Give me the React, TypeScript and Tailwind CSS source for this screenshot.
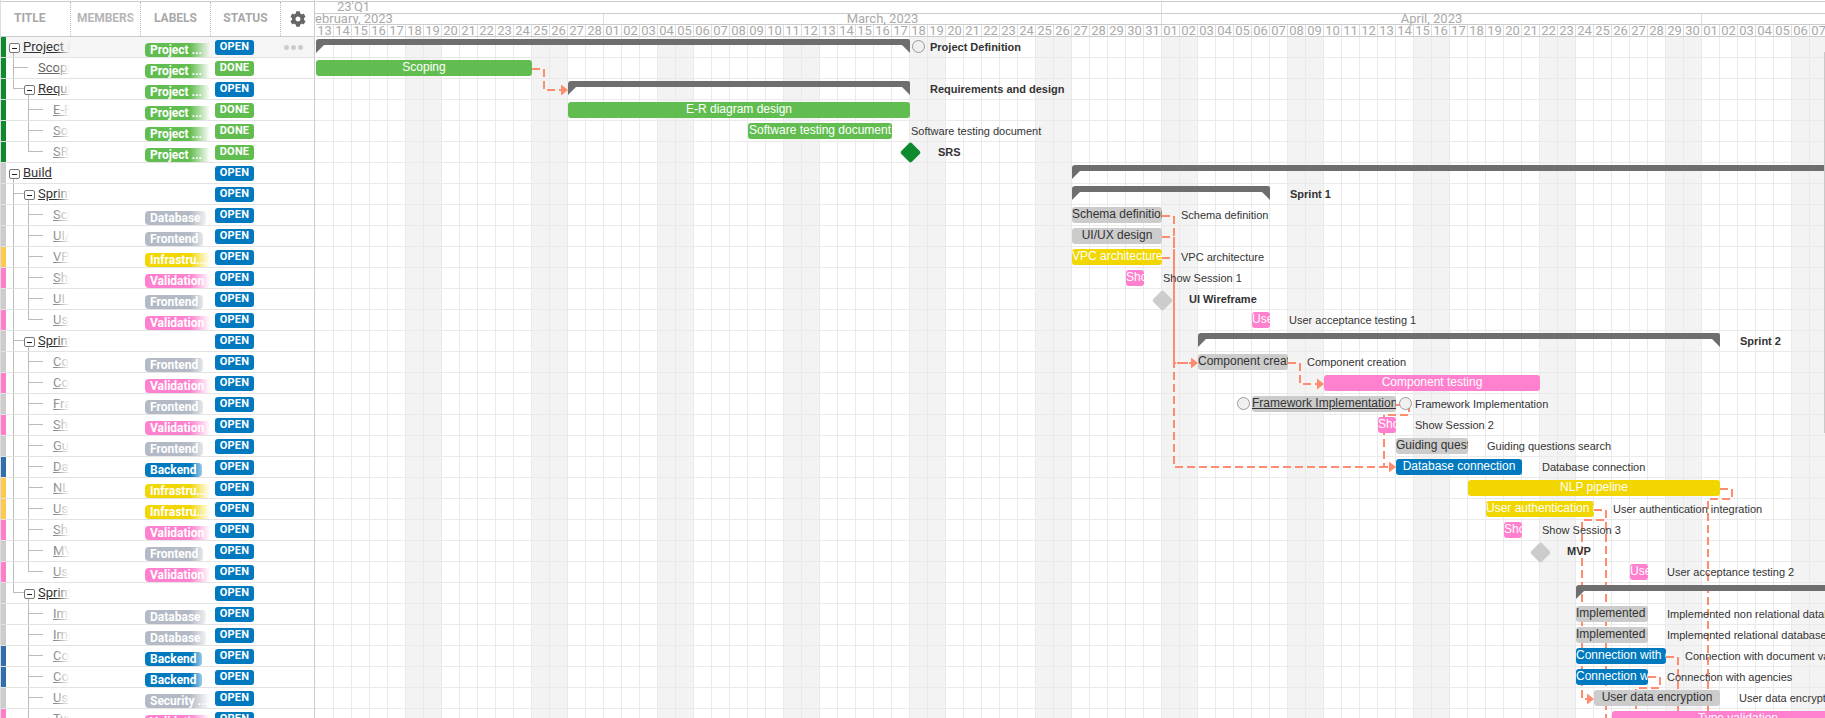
import { FaCog } from 'react-icons/fa'

type Status = 'OPEN' | 'DONE'
type LabelKind = 'project' | 'database' | 'frontend' | 'infra' | 'validation' | 'backend' | 'security'

interface TreeRow {
  title: string
  level: 0 | 1 | 2
  strip: string
  label?: LabelKind
  status: Status
  parent?: boolean
  last?: boolean
  outer?: boolean
}

const GREEN = 'bg-[#0f8a2f]'
const GRAY = 'bg-[#cccccc]'
const YELLOW = 'bg-[#ffc94f]'
const PINK = 'bg-[#ff7ecb]'
const BLUE = 'bg-[#2f6fae]'

const labels: Record<LabelKind, { text: string; cls: string }> = {
  project: { text: 'Project ...', cls: 'bg-[#61bd4f] w-[70px]' },
  database: { text: 'Database', cls: 'bg-[#b3bac5] w-[61px]' },
  frontend: { text: 'Frontend', cls: 'bg-[#b3bac5] w-[58px]' },
  infra: { text: 'Infrastru...', cls: 'bg-[#f2d600] w-[70px]' },
  validation: { text: 'Validation', cls: 'bg-[#ff80ce] w-[70px]' },
  backend: { text: 'Backend', cls: 'bg-[#0079bf] w-[57px]' },
  security: { text: 'Security ...', cls: 'bg-[#b3bac5] w-[70px]' },
}

const rows: TreeRow[] = [
  { title: 'Project Definition', level: 0, strip: GREEN, label: 'project', status: 'OPEN', parent: true },
  { title: 'Scoping', level: 1, strip: GREEN, label: 'project', status: 'DONE' },
  { title: 'Requirements and design', level: 1, strip: GREEN, label: 'project', status: 'OPEN', parent: true, last: true },
  { title: 'E-R diagram design', level: 2, strip: GREEN, label: 'project', status: 'DONE' },
  { title: 'Software testing document', level: 2, strip: GREEN, label: 'project', status: 'DONE' },
  { title: 'SRS', level: 2, strip: GREEN, label: 'project', status: 'DONE', last: true },
  { title: 'Build', level: 0, strip: GRAY, status: 'OPEN', parent: true },
  { title: 'Sprint 1', level: 1, strip: GRAY, status: 'OPEN', parent: true },
  { title: 'Schema definition', level: 2, strip: GRAY, label: 'database', status: 'OPEN', outer: true },
  { title: 'UI/UX design', level: 2, strip: GRAY, label: 'frontend', status: 'OPEN', outer: true },
  { title: 'VPC architecture', level: 2, strip: YELLOW, label: 'infra', status: 'OPEN', outer: true },
  { title: 'Show Session 1', level: 2, strip: PINK, label: 'validation', status: 'OPEN', outer: true },
  { title: 'UI Wireframe', level: 2, strip: GRAY, label: 'frontend', status: 'OPEN', outer: true },
  { title: 'User acceptance testing 1', level: 2, strip: PINK, label: 'validation', status: 'OPEN', outer: true, last: true },
  { title: 'Sprint 2', level: 1, strip: GRAY, status: 'OPEN', parent: true },
  { title: 'Component creation', level: 2, strip: GRAY, label: 'frontend', status: 'OPEN', outer: true },
  { title: 'Component testing', level: 2, strip: PINK, label: 'validation', status: 'OPEN', outer: true },
  { title: 'Framework Implementation', level: 2, strip: GRAY, label: 'frontend', status: 'OPEN', outer: true },
  { title: 'Show Session 2', level: 2, strip: PINK, label: 'validation', status: 'OPEN', outer: true },
  { title: 'Guiding questions search', level: 2, strip: GRAY, label: 'frontend', status: 'OPEN', outer: true },
  { title: 'Database connection', level: 2, strip: BLUE, label: 'backend', status: 'OPEN', outer: true },
  { title: 'NLP pipeline', level: 2, strip: YELLOW, label: 'infra', status: 'OPEN', outer: true },
  { title: 'User authentication integration', level: 2, strip: YELLOW, label: 'infra', status: 'OPEN', outer: true },
  { title: 'Show Session 3', level: 2, strip: PINK, label: 'validation', status: 'OPEN', outer: true },
  { title: 'MVP', level: 2, strip: GRAY, label: 'frontend', status: 'OPEN', outer: true },
  { title: 'User acceptance testing 2', level: 2, strip: PINK, label: 'validation', status: 'OPEN', outer: true, last: true },
  { title: 'Sprint 3', level: 1, strip: GRAY, status: 'OPEN', parent: true, last: true },
  { title: 'Implemented non relational database', level: 2, strip: GRAY, label: 'database', status: 'OPEN' },
  { title: 'Implemented relational database', level: 2, strip: GRAY, label: 'database', status: 'OPEN' },
  { title: 'Connection with document validation', level: 2, strip: BLUE, label: 'backend', status: 'OPEN' },
  { title: 'Connection with agencies', level: 2, strip: BLUE, label: 'backend', status: 'OPEN' },
  { title: 'User data encryption', level: 2, strip: GRAY, label: 'security', status: 'OPEN' },
  { title: 'Type validation', level: 2, strip: PINK, label: 'validation', status: 'OPEN' },
]

const DAY = 18
const ROW = 21
const CHART_X = 315

// day numbers from Feb 13 to May 7
const days: string[] = []
const monthLengths: [number, number][] = [[13, 28], [1, 31], [1, 30], [1, 7]]
monthLengths.forEach(([from, to]) => {
  for (let d = from; d <= to; d++) days.push(String(d).padStart(2, '0'))
})

type BarColor = 'green' | 'gray' | 'yellow' | 'pink' | 'blue'
const barColors: Record<BarColor, string> = {
  green: 'bg-[#61bd4f] text-white',
  gray: 'bg-[#cccccc] text-[#333333]',
  yellow: 'bg-[#f2d600] text-white',
  pink: 'bg-[#ff80ce] text-white',
  blue: 'bg-[#0079bf] text-white',
}

interface Bar {
  row: number
  from: number
  to: number
  color: BarColor
  text: string
  underline?: boolean
}

const bars: Bar[] = [
  { row: 1, from: 0, to: 12, color: 'green', text: 'Scoping' },
  { row: 3, from: 14, to: 33, color: 'green', text: 'E-R diagram design' },
  { row: 4, from: 24, to: 32, color: 'green', text: 'Software testing document' },
  { row: 8, from: 42, to: 47, color: 'gray', text: 'Schema definition' },
  { row: 9, from: 42, to: 47, color: 'gray', text: 'UI/UX design' },
  { row: 10, from: 42, to: 47, color: 'yellow', text: 'VPC architecture' },
  { row: 11, from: 45, to: 46, color: 'pink', text: 'Show Session 1' },
  { row: 13, from: 52, to: 53, color: 'pink', text: 'User acceptance testing 1' },
  { row: 15, from: 49, to: 54, color: 'gray', text: 'Component creation' },
  { row: 16, from: 56, to: 68, color: 'pink', text: 'Component testing' },
  { row: 17, from: 52, to: 60, color: 'gray', text: 'Framework Implementation', underline: true },
  { row: 18, from: 59, to: 60, color: 'pink', text: 'Show Session 2' },
  { row: 19, from: 60, to: 64, color: 'gray', text: 'Guiding questions search' },
  { row: 20, from: 60, to: 67, color: 'blue', text: 'Database connection' },
  { row: 21, from: 64, to: 78, color: 'yellow', text: 'NLP pipeline' },
  { row: 22, from: 65, to: 71, color: 'yellow', text: 'User authentication integration' },
  { row: 23, from: 66, to: 67, color: 'pink', text: 'Show Session 3' },
  { row: 25, from: 73, to: 74, color: 'pink', text: 'User acceptance testing 2' },
  { row: 27, from: 70, to: 74, color: 'gray', text: 'Implemented non relational database' },
  { row: 28, from: 70, to: 74, color: 'gray', text: 'Implemented relational database' },
  { row: 29, from: 70, to: 75, color: 'blue', text: 'Connection with document validation' },
  { row: 30, from: 70, to: 74, color: 'blue', text: 'Connection with agencies' },
  { row: 31, from: 71, to: 78, color: 'gray', text: 'User data encryption' },
  { row: 32, from: 72, to: 86, color: 'pink', text: 'Type validation' },
]

// [row, from, to, open ended on the right]
const groups: [number, number, number, boolean][] = [
  [0, 0, 33, false],
  [2, 14, 33, false],
  [6, 42, 100, true],
  [7, 42, 53, false],
  [14, 49, 78, false],
  [26, 70, 100, true],
]

// [row, x, text, bold]
const sideLabels: [number, number, string, boolean][] = [
  [0, 930, 'Project Definition', true],
  [2, 930, 'Requirements and design', true],
  [4, 911, 'Software testing document', false],
  [5, 938, 'SRS', true],
  [7, 1290, 'Sprint 1', true],
  [8, 1181, 'Schema definition', false],
  [10, 1181, 'VPC architecture', false],
  [11, 1163, 'Show Session 1', false],
  [12, 1189, 'UI Wireframe', true],
  [13, 1289, 'User acceptance testing 1', false],
  [14, 1740, 'Sprint 2', true],
  [15, 1307, 'Component creation', false],
  [17, 1415, 'Framework Implementation', false],
  [18, 1415, 'Show Session 2', false],
  [19, 1487, 'Guiding questions search', false],
  [20, 1542, 'Database connection', false],
  [22, 1613, 'User authentication integration', false],
  [23, 1542, 'Show Session 3', false],
  [24, 1567, 'MVP', true],
  [25, 1667, 'User acceptance testing 2', false],
  [27, 1667, 'Implemented non relational database', false],
  [28, 1667, 'Implemented relational database', false],
  [29, 1685, 'Connection with document validation', false],
  [30, 1667, 'Connection with agencies', false],
  [31, 1739, 'User data encryption', false],
]

// links, in page coordinates
const links = [
  'M532 69H544V90H563',
  'M1162 216H1174V467H1391',
  'M1162 237H1174V363H1193',
  'M1162 258H1174V363H1193',
  'M1288 363H1300V384H1319',
  'M1396 405H1409V415H1384V467H1391',
  'M1720 489H1732V499H1708V720',
  'M1594 510H1606V520H1582V699H1589',
  'M1594 510H1606V720',
  'M1666 657H1678V720',
  'M1648 677H1660V688H1636V720',
]
const arrowTips: [number, number][] = [[568, 90], [1198, 363], [1324, 384], [1396, 467], [1594, 699]]

function TreeCell({ row, hover }: { row: TreeRow; hover: boolean }) {
  const textLeft = row.level === 0 ? 23 : row.level === 1 ? 38 : 53
  const color = row.parent ? 'text-[#333333]' : row.level === 1 ? 'text-[#666666]' : 'text-[#8c8c8c]'
  return (
    <div className="relative w-[64px] h-full overflow-hidden shrink-0">
      {/* tree lines (cell starts at x=6) */}
      {row.level === 1 && <span className={`absolute left-[7px] top-0 w-px bg-[#bbbbbb] ${row.last ? 'h-[10px]' : 'h-full'}`} />}
      {row.level === 1 && <span className="absolute left-[7px] top-[9px] w-[15px] h-px bg-[#bbbbbb]" />}
      {row.outer && <span className="absolute left-[7px] top-0 w-px h-full bg-[#bbbbbb]" />}
      {row.level === 2 && <span className={`absolute left-[22px] top-0 w-px bg-[#bbbbbb] ${row.last ? 'h-[10px]' : 'h-full'}`} />}
      {row.level === 2 && <span className="absolute left-[22px] top-[9px] w-[15px] h-px bg-[#bbbbbb]" />}
      {row.parent && row.level === 0 && <span className="absolute left-[7px] top-[14px] w-px h-[7px] bg-[#bbbbbb]" />}
      {row.parent && row.level === 1 && <span className="absolute left-[22px] top-[14px] w-px h-[7px] bg-[#bbbbbb]" />}
      {row.parent && (
        <span className={`absolute top-[6px] w-[11px] h-[10px] border border-[#777777] rounded-[2px] bg-white flex items-center justify-center ${row.level === 0 ? 'left-[3px]' : 'left-[18px]'}`}>
          <span className="w-[5px] h-px bg-[#222222]" />
        </span>
      )}
      <span
        className={`absolute top-0 leading-[20px] text-[13px] underline whitespace-nowrap ${color}`}
        style={{ left: textLeft - 6 }}
      >
        {row.title}
      </span>
      <span className={`absolute right-0 top-0 bottom-0 w-[14px] bg-gradient-to-r from-transparent ${hover ? 'to-[#f5f5f5]' : 'to-white'}`} />
    </div>
  )
}

function SidebarRow({ row, hover }: { row: TreeRow; hover: boolean }) {
  const label = row.label ? labels[row.label] : null
  return (
    <div className={`flex h-[21px] shrink-0 border-b border-[#e3e3e3] ${hover ? 'bg-[#f5f5f5]' : 'bg-white'}`}>
      <div className={`w-[5px] shrink-0 ${row.strip}`} />
      <TreeCell row={row} hover={hover} />
      <div className="w-[70px] shrink-0" />
      <div className="relative w-[70px] shrink-0 overflow-hidden pl-[5px] pt-[6px]">
        {label && (
          <div className={`h-[14px] rounded-[4px] pl-[5px] text-[12px] leading-[14px] font-bold text-white whitespace-nowrap overflow-hidden ${label.cls}`}>
            {label.text}
          </div>
        )}
        <span className={`absolute right-0 top-0 bottom-0 w-[20px] bg-gradient-to-r from-transparent ${hover ? 'to-[#f5f5f5]' : 'to-white'}`} />
      </div>
      <div className="w-[70px] shrink-0 pl-[5px] pt-[3px]">
        <div className={`w-[39px] h-[15px] rounded-[3px] text-center text-[11px] leading-[13px] font-bold text-white tracking-[0.2px] ${row.status === 'OPEN' ? 'bg-[#0079bf]' : 'bg-[#61bd4f]'}`}>
          {row.status}
        </div>
      </div>
      {hover && (
        <div className="flex-1 flex items-center gap-[2px] pl-[4px]">
          <span className="w-[5px] h-[5px] rounded-full bg-[#cccccc]" />
          <span className="w-[5px] h-[5px] rounded-full bg-[#cccccc]" />
          <span className="w-[5px] h-[5px] rounded-full bg-[#cccccc]" />
        </div>
      )}
    </div>
  )
}

function Sidebar() {
  return (
    <div className="w-[315px] shrink-0 h-full border-r border-[#cccccc] border-l border-l-[#dddddd] flex flex-col overflow-hidden font-['Roboto',sans-serif]">
      <div className="flex h-[36px] shrink-0 border-t border-t-[#cccccc] mt-px border-b border-[#cccccc] text-[12px] font-bold text-[#a8a8a8]">
        <div className="w-[70px] shrink-0 border-r border-dotted border-[#bbbbbb] pl-[13px] leading-[33px]">TITLE</div>
        <div className="relative w-[70px] shrink-0 border-r border-dotted border-[#bbbbbb] text-center leading-[33px] overflow-hidden text-[#b5b5b5]">
          MEMBERS
          <span className="absolute right-0 top-0 bottom-0 w-[10px] bg-gradient-to-r from-transparent to-white" />
        </div>
        <div className="w-[70px] shrink-0 border-r border-dotted border-[#bbbbbb] text-center leading-[33px]">LABELS</div>
        <div className="w-[70px] shrink-0 border-r border-dotted border-[#bbbbbb] text-center leading-[33px]">STATUS</div>
        <div className="flex-1 flex items-center justify-center pb-px">
          <FaCog className="w-[16px] h-[16px] text-[#666666]" />
        </div>
      </div>
      {rows.map((row, i) => (
        <SidebarRow key={row.title} row={row} hover={i === 0} />
      ))}
    </div>
  )
}

function TimeHeader() {
  return (
    <div className="h-[37px] shrink-0 pl-px text-[#aaaaaa] text-[13px] font-['Roboto',sans-serif] bg-white">
      <div className="flex h-[12px] mt-px border-t border-[#cccccc]">
        <div className="w-[846px] shrink-0 border-r border-[#dddddd] pl-[21px] whitespace-nowrap leading-[10px]">23'Q1</div>
      </div>
      <div className="flex h-[11px] border-t border-[#cccccc] -ml-px leading-[9px]">
        <div className="w-[289px] shrink-0 border-r border-[#dddddd] overflow-hidden whitespace-nowrap pl-0">
          <span className="-ml-[7px] inline-block">February, 2023</span>
        </div>
        <div className="w-[558px] shrink-0 border-r border-[#dddddd] text-center whitespace-nowrap">March, 2023</div>
        <div className="w-[540px] shrink-0 border-r border-[#dddddd] text-center whitespace-nowrap">April, 2023</div>
      </div>
      <div className="flex h-[11px] border-t border-b border-[#cccccc] box-content leading-[11px]">
        {days.map((d, i) => (
          <div key={i} className="w-[18px] shrink-0 border-r border-[#dddddd] text-center">{d}</div>
        ))}
      </div>
    </div>
  )
}

function GridLines() {
  return (
    <>
      <div className="absolute inset-0 flex pl-px">
        {days.map((_, i) => {
          const weekend = (i + 2) % 7 === 0 || (i + 1) % 7 === 0
          return <div key={i} className={`w-[18px] shrink-0 border-r border-[#eaeaea] ${weekend ? 'bg-[#f3f3f3]' : ''}`} />
        })}
      </div>
      <div className="absolute inset-0 flex flex-col">
        {rows.map((_, i) => (
          <div key={i} className="h-[21px] shrink-0 border-b border-[#eaeaea]" />
        ))}
      </div>
    </>
  )
}

function GroupBar({ row, from, to, open }: { row: number; from: number; to: number; open: boolean }) {
  const left = 1 + from * DAY
  return (
    <div className="absolute h-[14px]" style={{ top: row * ROW + 2, left, width: (to - from) * DAY }}>
      <div className="h-[6px] bg-[#6e6e6e] rounded-tl-[3px] rounded-tr-[2px]" />
      <div className="absolute left-0 top-[6px] w-[8px] h-[8px] bg-[#6e6e6e] [clip-path:polygon(0_0,100%_0,0_100%)]" />
      {!open && <div className="absolute right-0 top-[6px] w-[8px] h-[8px] bg-[#6e6e6e] [clip-path:polygon(0_0,100%_0,100%_100%)]" />}
    </div>
  )
}

function Diamond({ x, y, color }: { x: number; y: number; color: string }) {
  return (
    <div
      className={`absolute w-[15px] h-[15px] rotate-45 rounded-[2px] ${color}`}
      style={{ left: x - CHART_X - 7.5, top: y - 37 - 7.5 }}
    />
  )
}

function Circle({ x, y }: { x: number; y: number }) {
  return (
    <div
      className="absolute w-[13px] h-[13px] rounded-full border border-[#999999] bg-[#f0f0f0]"
      style={{ left: x - CHART_X - 6.5, top: y - 37 - 6.5 }}
    />
  )
}

function Links() {
  return (
    <svg
      className="absolute left-0 top-0 w-[1510px] h-[681px]"
      viewBox={`${CHART_X} 37 1510 681`}
      fill="none"
    >
      {links.map((d) => (
        <path key={d} d={d} stroke="#ff8c6e" strokeWidth={2} strokeDasharray="8 4" />
      ))}
      {arrowTips.map(([x, y]) => (
        <polygon key={`${x}-${y}`} points={`${x - 7},${y - 5.5} ${x},${y} ${x - 7},${y + 5.5}`} fill="#ff8c6e" />
      ))}
    </svg>
  )
}

function Chart() {
  return (
    <div className="flex-1 min-w-0 h-full flex flex-col overflow-hidden">
      <TimeHeader />
      <div className="relative flex-1 overflow-hidden font-['Liberation_Sans',Arial,sans-serif]">
        <GridLines />
        <Links />
        {groups.map(([row, from, to, open]) => (
          <GroupBar key={row} row={row} from={from} to={to} open={open} />
        ))}
        {bars.map((b) => (
          <div
            key={b.row}
            className={`absolute h-[16px] rounded-[3px] overflow-hidden text-center whitespace-nowrap text-[12px] leading-[15px] ${barColors[b.color]} ${b.underline ? 'underline' : ''}`}
            style={{ top: b.row * ROW + 2, left: 1 + b.from * DAY, width: (b.to - b.from) * DAY }}
          >
            {b.text}
          </div>
        ))}
        <Circle x={918.5} y={46.5} />
        <Circle x={1243} y={403} />
        <Circle x={1405} y={403} />
        <Diamond x={910} y={152.5} color="bg-[#0f8a2f]" />
        <Diamond x={1162} y={300} color="bg-[#cccccc]" />
        <Diamond x={1540} y={552} color="bg-[#cccccc]" />
        {sideLabels.map(([row, x, text, bold]) => (
          <div
            key={text}
            className={`absolute whitespace-nowrap text-[11px] leading-[16px] text-[#333333] ${bold ? 'font-bold' : ''}`}
            style={{ top: row * ROW + 2, left: x - CHART_X }}
          >
            {text}
          </div>
        ))}
      </div>
    </div>
  )
}

export default function App() {
  return (
    <div className="relative flex w-[1825px] h-[718px] overflow-hidden bg-white">
      <Sidebar />
      <Chart />
      {/* scrollbar thumb */}
      <div className="absolute right-0 top-[52px] h-[381px] w-px bg-[#c8c8c8]" />
    </div>
  )
}
